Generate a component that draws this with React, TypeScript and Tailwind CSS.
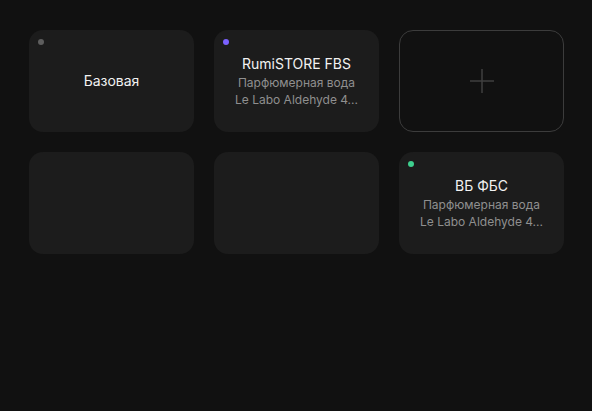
import React from "react";

type Card =
  | { kind: "store"; dot?: string; title?: string; lines?: string[] }
  | { kind: "add" };

const cards: Card[] = [
  { kind: "store", dot: "bg-[#5e5e5e]", title: "Базовая" },
  { kind: "store", dot: "bg-[#7b61ff]", title: "RumiSTORE FBS", lines: ["Парфюмерная вода", "Le Labo Aldehyde 4..."] },
  { kind: "add" },
  { kind: "store" },
  { kind: "store" },
  { kind: "store", dot: "bg-[#3ecf8e]", title: "ВБ ФБС", lines: ["Парфюмерная вода", "Le Labo Aldehyde 4..."] },
];

export default function App() {
  return (
    <div
      className="w-[592px] h-[411px] bg-[#111111] pl-[29px] pr-[28px] pt-[30px]"
      style={{ fontFamily: "Inter, 'Noto Sans', sans-serif" }}
    >
      <div className="grid grid-cols-3 gap-x-5 gap-y-5">
        {cards.map((c, i) =>
          c.kind === "add" ? (
            <div
              key={i}
              className="h-[102px] rounded-[14px] border border-[#3c3c3c] flex items-center justify-center"
            >
              <svg width="26" height="26" viewBox="0 0 26 26" fill="none">
                <path d="M13 1v24M1 13h24" stroke="#3f3f3f" strokeWidth="1.5" />
              </svg>
            </div>
          ) : (
            <div
              key={i}
              className="relative h-[102px] rounded-[14px] bg-[#1c1c1c] flex flex-col items-center justify-center text-center"
            >
              {c.dot && (
                <span className={`absolute left-[9px] top-[9px] w-[6px] h-[6px] rounded-full ${c.dot}`} />
              )}
              {c.title && (
                <div className="text-[14px] leading-[20px] text-[#f2f2f2]">{c.title}</div>
              )}
              {c.lines && (
                <div className="text-[12px] leading-[17px] text-[#8f8f8f]">
                  {c.lines.map((l) => (
                    <div key={l}>{l}</div>
                  ))}
                </div>
              )}
            </div>
          )
        )}
      </div>
    </div>
  );
}
